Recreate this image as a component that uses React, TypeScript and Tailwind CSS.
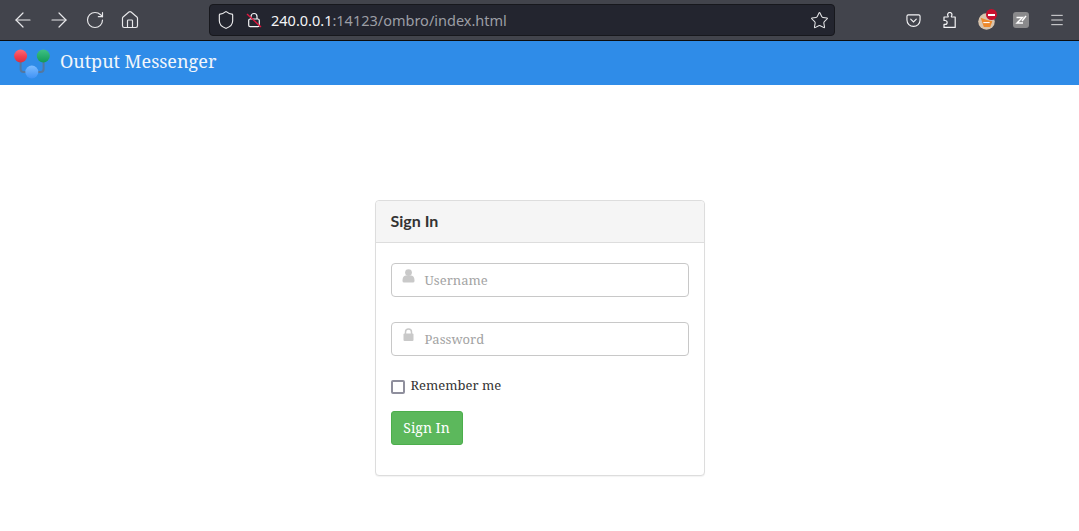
import { ArrowLeft, ArrowRight, RotateCw, Home, Shield, Star, Menu } from 'lucide-react';

const serif = 'font-["Noto_Serif","DejaVu_Serif",serif]';

function Logo() {
  return (
    <svg width="38" height="32" viewBox="0 0 38 32" className="shrink-0">
      <defs>
        <linearGradient id="r" x1="0" y1="0" x2="0" y2="1">
          <stop offset="0%" stopColor="#ff6a76" />
          <stop offset="55%" stopColor="#f0404f" />
          <stop offset="100%" stopColor="#d9303f" />
        </linearGradient>
        <linearGradient id="g" x1="0" y1="0" x2="0" y2="1">
          <stop offset="0%" stopColor="#3fc184" />
          <stop offset="100%" stopColor="#129a58" />
        </linearGradient>
        <linearGradient id="b" x1="0" y1="0" x2="0" y2="1">
          <stop offset="0%" stopColor="#7cbcff" />
          <stop offset="100%" stopColor="#3f92f5" />
        </linearGradient>
      </defs>
      <path d="M7.6 12v9q0 3 3 3h17q3 0 3-3v-9" fill="none" stroke="#54779f" strokeWidth="2" />
      <circle cx="7.6" cy="8" r="6.5" fill="url(#r)" />
      <circle cx="30.3" cy="8" r="6.5" fill="url(#g)" />
      <circle cx="18.8" cy="24" r="6.5" fill="url(#b)" />
    </svg>
  );
}

function BrokenLock() {
  return (
    <svg width="16" height="16" viewBox="0 0 16 16" fill="none">
      <path d="M5 7V4.5a3 3 0 0 1 6 0V7" stroke="#f4f4f6" strokeWidth="1.2" />
      <rect x="2.7" y="7" width="10.6" height="7.6" rx="1.4" stroke="#f4f4f6" strokeWidth="1.2" />
      <path d="M1 2l14 13" stroke="#e0173f" strokeWidth="1.4" />
    </svg>
  );
}

function PocketIcon() {
  return (
    <svg width="15" height="15" viewBox="0 0 16 16" fill="none" stroke="#f4f4f6" strokeWidth="1.2">
      <path d="M2.5 2h11A1.5 1.5 0 0 1 15 3.5V7.5a7 6.8 0 0 1-14 0V3.5A1.5 1.5 0 0 1 2.5 2z" />
      <path d="M5 6.5l3 3 3-3" strokeLinecap="round" />
    </svg>
  );
}

function PuzzleIcon() {
  return (
    <svg width="16" height="17" viewBox="0 0 16 17" fill="none" stroke="#f4f4f6" strokeWidth="1.2" strokeLinejoin="round">
      <path d="M2 5h3.6c.6 0 .8-.5.5-1-.3-.4-.5-.9-.5-1.3a2.2 2.2 0 0 1 4.4 0c0 .4-.2.9-.5 1.3-.3.5-.1 1 .5 1h3.2v10.4H2v-3h1.2a1.8 1.8 0 0 0 0-3.9H2z" />
    </svg>
  );
}

function FoxExtension() {
  return (
    <div className="relative h-[20px] w-[19px]">
      <svg width="17" height="17" viewBox="0 0 16 16" className="absolute left-0 top-[3px]">
        <circle cx="8" cy="8" r="7.8" fill="#d9c4ac" />
        <path d="M2.5 4.5l6 2.2 5 1-2 5.5H5.5z" fill="#ee8a2c" />
        <path d="M5 9h6" stroke="#fff" strokeWidth="1" />
      </svg>
      <span className="absolute -top-[1px] left-[8px] flex h-[11px] w-[11px] items-center justify-center rounded-full bg-[#c8102e]">
        <span className="h-[2px] w-[7px] bg-white" />
      </span>
    </div>
  );
}

function NoteExtension() {
  return (
    <div className="flex h-4 w-4 items-center justify-center rounded-[3px] bg-[#8a8a8c]">
      <svg width="12" height="12" viewBox="0 0 12 12" fill="none" stroke="#fff" strokeWidth="1.4">
        <path d="M1.5 3.5h6L2 9h6" />
        <path d="M7 7l4-5" />
      </svg>
    </div>
  );
}

function UserGlyph() {
  return (
    <svg width="13" height="14" viewBox="0 0 13 14" fill="#c9c9c9">
      <circle cx="6.5" cy="3.6" r="3.4" />
      <path d="M0.5 11c0-3 2-4.4 3.4-4.4h5.2c1.4 0 3.4 1.4 3.4 4.4v1a1.6 1.6 0 0 1-1.6 1.6H2.1A1.6 1.6 0 0 1 0.5 12z" />
    </svg>
  );
}

function LockGlyph() {
  return (
    <svg width="11" height="13" viewBox="0 0 11 13" fill="#c9c9c9">
      <path d="M2.5 6V4a3 3 0 0 1 6 0v2" fill="none" stroke="#c9c9c9" strokeWidth="1.5" />
      <rect x="0.5" y="5.5" width="10" height="7.5" rx="1" />
    </svg>
  );
}

function Field({ icon, placeholder }: { icon: React.ReactNode; placeholder: string }) {
  return (
    <div className="flex h-[34px] items-start rounded border border-[#c8c8c8] bg-white">
      <span className="ml-[10px] mt-[5px] flex w-[14px] justify-center">{icon}</span>
      <span className="ml-[9px] mt-[7px] text-[13px] leading-[18px] text-[#a3a3a3]">{placeholder}</span>
    </div>
  );
}

export default function App() {
  return (
    <div className={`flex h-[531px] w-[1079px] flex-col overflow-hidden bg-white ${serif}`}>
      <div className='flex h-[41px] items-center border-b border-[#0c0c0d] bg-[#42444c] font-["Noto_Sans",sans-serif] text-[#e8e8ea]'>
        <div className="ml-[11px] flex w-[198px] items-center">
          <ArrowLeft size={24} strokeWidth={1.2} className="mr-[12px]" />
          <ArrowRight size={24} strokeWidth={1.2} className="mr-[14px]" />
          <RotateCw size={20} strokeWidth={1.4} className="mr-[15px]" />
          <Home size={20} strokeWidth={1.4} />
        </div>
        <div className="flex h-[32px] w-[626px] items-center rounded border border-[#17181d] bg-[#23252f] pl-[6px] pr-[5px]">
          <Shield size={20} strokeWidth={1.4} />
          <span className="ml-[10px]">
            <BrokenLock />
          </span>
          <span className="ml-[9px] text-[14.5px] leading-none text-[#f4f4f6]">
            240.0.0.1<span className="text-[#9c9ea5]">:14123/ombro/index.html</span>
          </span>
          <Star size={19} strokeWidth={1.3} className="ml-auto" />
        </div>
        <div className="ml-[71px] flex items-center">
          <PocketIcon />
          <span className="ml-[21px]">
            <PuzzleIcon />
          </span>
          <span className="ml-[20px]">
            <FoxExtension />
          </span>
          <span className="ml-[16px]">
            <NoteExtension />
          </span>
          <Menu size={16} strokeWidth={1.4} className="ml-[20px]" />
        </div>
      </div>

      <div className="flex h-[44px] items-center bg-[#2f8ce8] pl-[13px]">
        <span className="mt-[2px]">
          <Logo />
        </span>
        <span className="mb-[4px] ml-[9px] text-[18px] text-[#f2f6fb]">Output Messenger</span>
      </div>

      <div className="mx-auto mt-[115px] h-[276px] w-[330px] rounded border border-[#ddd] bg-white shadow-[0_1px_1px_rgba(0,0,0,0.05)]">
        <div className='flex h-[42px] items-center rounded-t border-b border-[#ddd] bg-[#f5f5f5] pb-[2px] pl-[15px] font-["Lato",sans-serif] text-[16px] font-bold text-[#333]'>
          Sign In
        </div>
        <div className="px-[15px] pt-[20px]">
          <Field icon={<UserGlyph />} placeholder="Username" />
          <div className="mt-[25px]">
            <Field icon={<LockGlyph />} placeholder="Password" />
          </div>
          <label className="mt-[23px] flex h-[16px] items-center">
            <span className="h-[14px] w-[14px] rounded-[2px] border-2 border-[#8f8f9d] bg-white" />
            <span className="ml-[6px] -mt-[2px] text-[13px] text-[#333]">Remember me</span>
          </label>
          <button className="mt-[16px] flex h-[34px] w-[72px] items-center justify-center rounded-[3px] border border-[#4cae4c] bg-[#5cb85c] pb-[2px] text-[14px] text-white">
            Sign In
          </button>
        </div>
      </div>
    </div>
  );
}
